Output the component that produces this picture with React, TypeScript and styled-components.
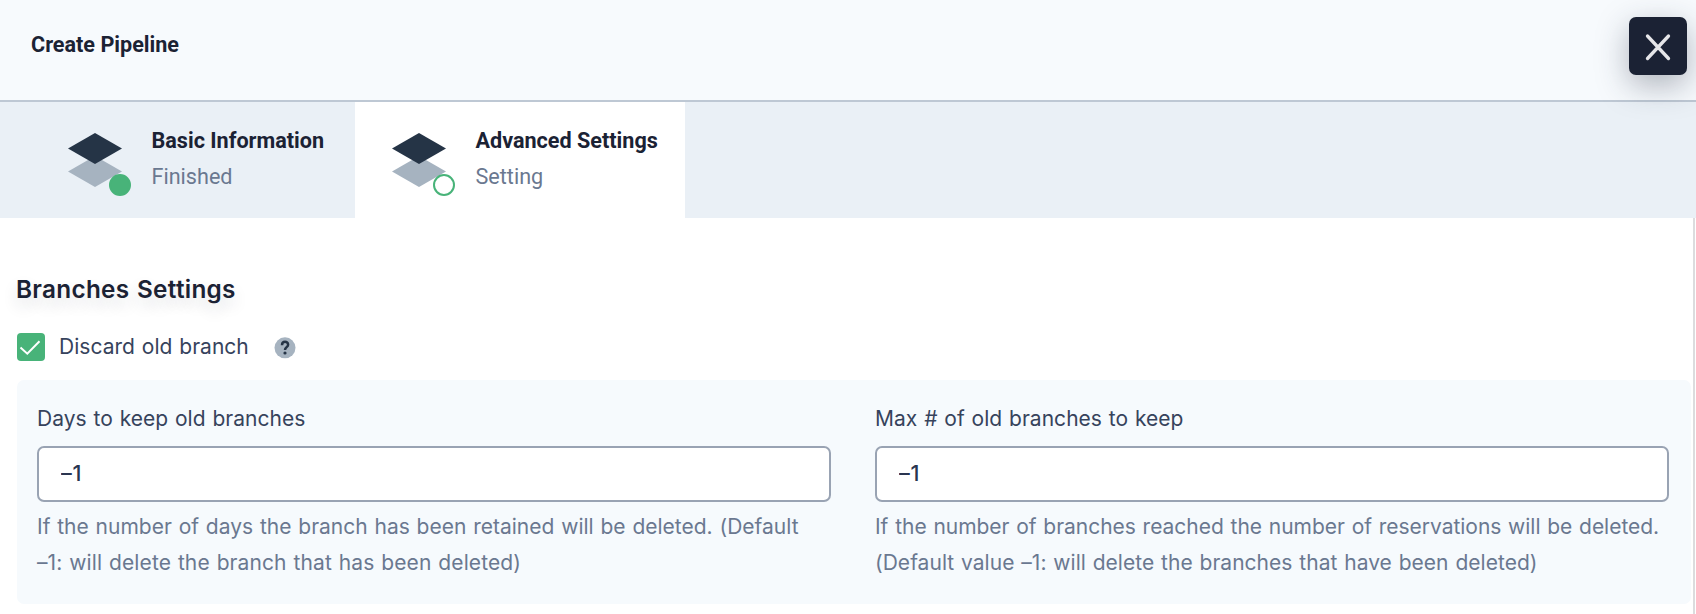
import React from "react";
import styled, { createGlobalStyle } from "styled-components";

const GlobalStyle = createGlobalStyle`
  * { box-sizing: border-box; }
  body { margin: 0; background: #fff; overflow: hidden; }
`;

const Modal = styled.div`
  display: flex;
  flex-direction: column;
  width: 1696px;
  height: 614px;
  overflow: hidden;
  font-family: Inter, "Liberation Sans", sans-serif;
  font-size: 21px;
  font-weight: 400;
  word-spacing: 0.9px;
  letter-spacing: 0.03px;
  color: #36435c;
`;

const Header = styled.header`
  display: flex;
  justify-content: space-between;
  align-items: flex-start;
  height: 102px;
  padding: 17px 9px 0 31px;
  background: #f7fafd;
  border-bottom: 2px solid #bec8d4;
`;

const Title = styled.h1`
  margin: 12px 0 0;
  font: 700 21.6px/32px Roboto, sans-serif;
  word-spacing: 0;
  letter-spacing: 0;
  color: #1b2234;
`;

const CloseButton = styled.button`
  position: relative;
  display: flex;
  align-items: center;
  justify-content: center;
  width: 58px;
  height: 58px;
  padding: 2px 0 0;
  border: 0;
  border-radius: 7px;
  background: #1b2234;
  box-shadow: 0 10px 32px rgba(36, 46, 66, 0.35);
`;

const Tabs = styled.nav`
  display: flex;
  height: 116px;
  padding-left: 31px;
  background: #eaf0f6;
`;

const Tab = styled.div<{ $active?: boolean }>`
  display: flex;
  width: ${(p) => (p.$active ? 330 : 324)}px;
  padding: 31px 0 0 37px;
  background: ${(p) => (p.$active ? "#fff" : "transparent")};
`;

const TabText = styled.div`
  margin: -10px 0 0 19.5px;
  font-family: Roboto, sans-serif;
  font-size: 21.6px;
  line-height: 36px;
  word-spacing: 0;
  letter-spacing: 0;
  white-space: nowrap;
`;

const TabName = styled.div`
  font-weight: 700;
  color: #1b2234;
`;

const TabState = styled.div`
  font-weight: 400;
  color: #6a7890;
`;

const Body = styled.main`
  flex: 1;
  width: 1695px;
  padding: 54px 2px 0 16px;
  border-right: 2px solid #dcdcde;
`;

const Heading = styled.h2`
  margin: 0;
  padding-bottom: 2px;
  font-size: 24.3px;
  font-weight: 600;
  line-height: 34px;
  letter-spacing: 0.3px;
  word-spacing: 1.2px;
  color: #1b2234;
  text-shadow: 0 8px 16px rgba(36, 46, 66, 0.14);
`;

const CheckRow = styled.div`
  display: flex;
  align-items: center;
  height: 28px;
  margin: 25px 0 19px 1px;
`;

const CheckBox = styled.span`
  display: flex;
  width: 28px;
  height: 28px;
  border-radius: 4px;
  background: #48b379;
`;

const CheckLabel = styled.span`
  width: 214px;
  margin-left: 14px;
  line-height: 30px;
  white-space: nowrap;
`;

const Panel = styled.section`
  display: grid;
  grid-template-columns: 794px 794px;
  column-gap: 44px;
  width: 1674px;
  height: 224px;
  margin-left: 1px;
  padding: 20px 0 0 20px;
  border-radius: 7px;
  background: #f6fafd;
`;

const Label = styled.label`
  display: block;
  height: 46px;
  line-height: 37px;
  white-space: nowrap;
`;

const Input = styled.input`
  display: block;
  width: 100%;
  height: 56px;
  padding: 0 22px 3px;
  border: 2px solid #99a3b3;
  border-radius: 7px;
  background: #fff;
  font: 500 21.5px Inter, sans-serif;
  letter-spacing: 0.8px;
  color: #2a3550;
  outline: 0;
`;

const Hint = styled.p`
  margin: 7px 0 0;
  line-height: 36px;
  color: #6a7890;
  white-space: nowrap;
`;

const Line = styled.span<{ $tracking: number }>`
  display: block;
  letter-spacing: ${(p) => p.$tracking}px;
`;

const Layers = ({ done }: { done?: boolean }) => (
  <svg width="64" height="64" viewBox="0 0 64 64">
    <path d="M0 38.5 27 23l27 15.5L27 54z" fill="#a6b3c0" />
    <path d="M0 15.5 27 0l27 15.5L27 31z" fill="#253446" />
    <circle cx="52" cy="52" r="10" fill={done ? "#48b379" : "#fff"} stroke="#48b379" strokeWidth="2" />
  </svg>
);

const fields = [
  {
    label: "Days to keep old branches",
    hint: [
      { text: "If the number of days the branch has been retained will be deleted. (Default", tracking: 0.005 },
      { text: "–1: will delete the branch that has been deleted)", tracking: 0.1 },
    ],
  },
  {
    label: "Max # of old branches to keep",
    hint: [
      { text: "If the number of branches reached the number of reservations will be deleted.", tracking: -0.025 },
      { text: "(Default value –1: will delete the branches that have been deleted)", tracking: 0.03 },
    ],
  },
];

export default function App() {
  return (
    <Modal>
      <GlobalStyle />
      <Header>
        <Title>Create Pipeline</Title>
        <CloseButton aria-label="Close">
          <svg width="26" height="28" viewBox="0 0 26 28" stroke="#e6e6e9" strokeWidth="3.3" strokeLinecap="round">
            <path d="M2.5 3 23.5 25.5M23.5 3 2.5 25.5" />
          </svg>
        </CloseButton>
      </Header>
      <Tabs>
        <Tab>
          <Layers done />
          <TabText>
            <TabName>Basic Information</TabName>
            <TabState>Finished</TabState>
          </TabText>
        </Tab>
        <Tab $active>
          <Layers />
          <TabText>
            <TabName>Advanced Settings</TabName>
            <TabState>Setting</TabState>
          </TabText>
        </Tab>
      </Tabs>
      <Body>
        <Heading>Branches Settings</Heading>
        <CheckRow>
          <CheckBox>
            <svg width="28" height="28" viewBox="0 0 28 28" fill="none" stroke="#fff" strokeWidth="2">
              <path d="m3.5 14.5 6.8 6.2L22.5 8.3" />
            </svg>
          </CheckBox>
          <CheckLabel>Discard old branch</CheckLabel>
          <svg width="24" height="24" viewBox="0 0 24 24" fill="none">
            <circle cx="12" cy="12.8" r="10.5" fill="#a6b3c0" />
            <path d="M9 10.2C9 5.6 15.1 6 15.1 9.7c0 2.4-3.1 2.5-3.1 5.3" stroke="#253446" strokeWidth="2.5" />
            <circle cx="12" cy="18" r="1.6" fill="#253446" />
          </svg>
        </CheckRow>
        <Panel>
          {fields.map((f) => (
            <div key={f.label}>
              <Label>{f.label}</Label>
              <Input defaultValue="–1" aria-label={f.label} />
              <Hint>
                {f.hint.map((line) => (
                  <Line key={line.text} $tracking={line.tracking}>
                    {line.text}
                  </Line>
                ))}
              </Hint>
            </div>
          ))}
        </Panel>
      </Body>
    </Modal>
  );
}
